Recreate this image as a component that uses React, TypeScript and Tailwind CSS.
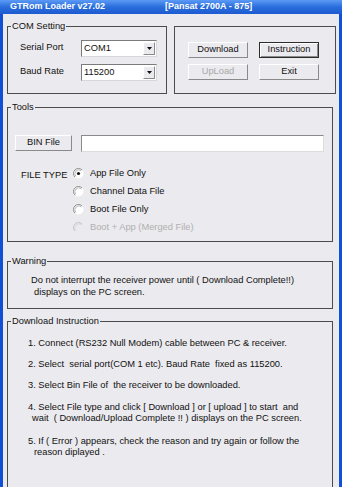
import type { ReactNode } from 'react'

const font = { fontFamily: '"Liberation Sans", Arial, sans-serif' }

function Combo({ value }: { value: string }) {
  return (
    <div className="flex h-[17px] w-[76px] border border-t-[#7b7b7b] border-l-[#7b7b7b] border-r-[#d8d8d8] border-b-[#d8d8d8] bg-white">
      <span className="flex-1 pl-[2px] leading-[15px]">{value}</span>
      <div className="m-[1px] flex w-[12px] items-center justify-center border border-t-white border-l-white border-r-[#8a8a8a] border-b-[#8a8a8a] bg-[#ebeaee]">
        <svg width="5" height="3" viewBox="0 0 5 3">
          <path d="M0 0h5L2.5 3z" fill="#111" />
        </svg>
      </div>
    </div>
  )
}

function Button({ children, disabled, primary, className = '' }: { children: ReactNode; disabled?: boolean; primary?: boolean; className?: string }) {
  const edge = primary
    ? 'border-[#2c2c2c] shadow-[inset_1px_1px_0_#fff,inset_-1px_-1px_0_#8a8a8a]'
    : 'border-t-white border-l-white border-r-[#8a8a8a] border-b-[#8a8a8a]'
  return (
    <div
      className={`flex h-[16px] items-center justify-center border bg-[#ebeaee] ${edge} ${disabled ? 'text-[#a8a8a8]' : 'text-[#111]'} ${className}`}
    >
      {children}
    </div>
  )
}

function Radio({ label, checked, disabled }: { label: string; checked?: boolean; disabled?: boolean }) {
  return (
    <div className={`flex h-[18px] items-center gap-[6px] ${disabled ? 'text-[#b0b0b0]' : ''}`}>
      <svg width="11" height="11" viewBox="0 0 11 11">
        <circle cx="5.5" cy="5.5" r="5" fill={disabled ? '#ebeaee' : '#fff'} />
        <path d="M1.96 9.04A5 5 0 0 1 9.04 1.96" fill="none" stroke={disabled ? '#c4c4c4' : '#8a8a8a'} />
        <path d="M2.7 8.3A4 4 0 0 1 8.3 2.7" fill="none" stroke={disabled ? '#d8d8d8' : '#b8b8b8'} />
        {checked && <circle cx="5.5" cy="5.5" r="1.6" fill="#111" />}
      </svg>
      <span>{label}</span>
    </div>
  )
}

function Group({ title, className = '', children }: { title: string; className?: string; children: ReactNode }) {
  return (
    <fieldset className={`border border-[#4c4c4c] ${className}`}>
      <legend className="ml-[3px] px-[1px] leading-[11px]">{title}</legend>
      {children}
    </fieldset>
  )
}

export default function App() {
  return (
    <div className="flex h-[487px] w-[342px] flex-col overflow-hidden bg-[#1150d4] text-[9.3px] text-[#111]" style={font}>
      <div className="flex h-[18px] items-center bg-gradient-to-b from-[#5b9af4] via-[#2a6ddc] to-[#1d5bd0] pl-[10px] text-[9px] font-bold text-white">
        <span className="w-[155px]">GTRom Loader v27.02</span>
        <span>[Pansat 2700A - 875]</span>
      </div>

      <div className="mx-[3px] flex flex-1 flex-col bg-[#ebeaee]">
        <div className="mt-[7px] flex">
          <Group title="COM Setting" className="ml-[4px] h-[73px] w-[160px]">
            <div className="grid grid-cols-[61px_76px] items-center gap-y-[7px] pl-[12px] pt-[8px]">
              <span>Serial Port</span>
              <Combo value="COM1" />
              <span>Baud Rate</span>
              <Combo value="115200" />
            </div>
          </Group>

          <div className="ml-[7px] mt-[5px] h-[68px] w-[162px] border border-[#4c4c4c]">
            <div className="grid grid-cols-[60px_60px] gap-x-[11px] gap-y-[6px] pl-[13px] pt-[15px]">
              <Button>Download</Button>
              <Button primary>Instruction</Button>
              <Button disabled>UpLoad</Button>
              <Button>Exit</Button>
            </div>
          </div>
        </div>

        <Group title="Tools" className="ml-[4px] mt-[8px] h-[140px] w-[326px]">
          <div className="flex items-center pl-[7px] pt-[22px]">
            <Button className="w-[57px]">BIN File</Button>
            <div className="ml-[9px] h-[17px] w-[243px] border border-t-[#8a8a8a] border-l-[#8a8a8a] border-r-[#dcdcdc] border-b-[#dcdcdc] bg-white" />
          </div>
          <div className="flex pl-[13px] pt-[13px]">
            <span className="w-[52px] pt-[4px]">FILE TYPE</span>
            <div className="flex flex-col">
              <Radio label="App File Only" checked />
              <Radio label="Channel Data File" />
              <Radio label="Boot File Only" />
              <Radio label="Boot + App (Merged File)" disabled />
            </div>
          </div>
        </Group>

        <Group title="Warning" className="ml-[4px] mt-[14px] h-[53px] w-[326px]">
          <div className="flex flex-col pl-[23px] pt-[7px] leading-[12px]">
            <span>Do not interrupt the receiver power until ( Download Complete!!)</span>
            <span className="pl-[3px]">displays on the PC screen.</span>
          </div>
        </Group>

        <Group title="Download Instruction" className="ml-[4px] mt-[7px] h-[220px] w-[326px]">
          <div className="flex flex-col pl-[20px] pt-[11px] leading-[11px]">
            <span>1. Connect (RS232 Null Modem) cable between PC &amp; receiver.</span>
            <span className="mt-[10px]">2. Select&nbsp; serial port(COM 1 etc). Baud Rate&nbsp; fixed as 115200.</span>
            <span className="mt-[10px]">3. Select Bin File of&nbsp; the receiver to be downloaded.</span>
            <div className="mt-[11px] flex flex-col">
              <span>4. Select File type and click [ Download ] or [ upload ] to start&nbsp; and</span>
              <span className="pl-[4px]">wait&nbsp; ( Download/Upload Complete !! ) displays on the PC screen.</span>
            </div>
            <div className="mt-[12px] flex flex-col">
              <span>5. If ( Error ) appears, check the reason and try again or follow the</span>
              <span className="pl-[6px]">reason diplayed .</span>
            </div>
          </div>
        </Group>
      </div>
    </div>
  )
}
